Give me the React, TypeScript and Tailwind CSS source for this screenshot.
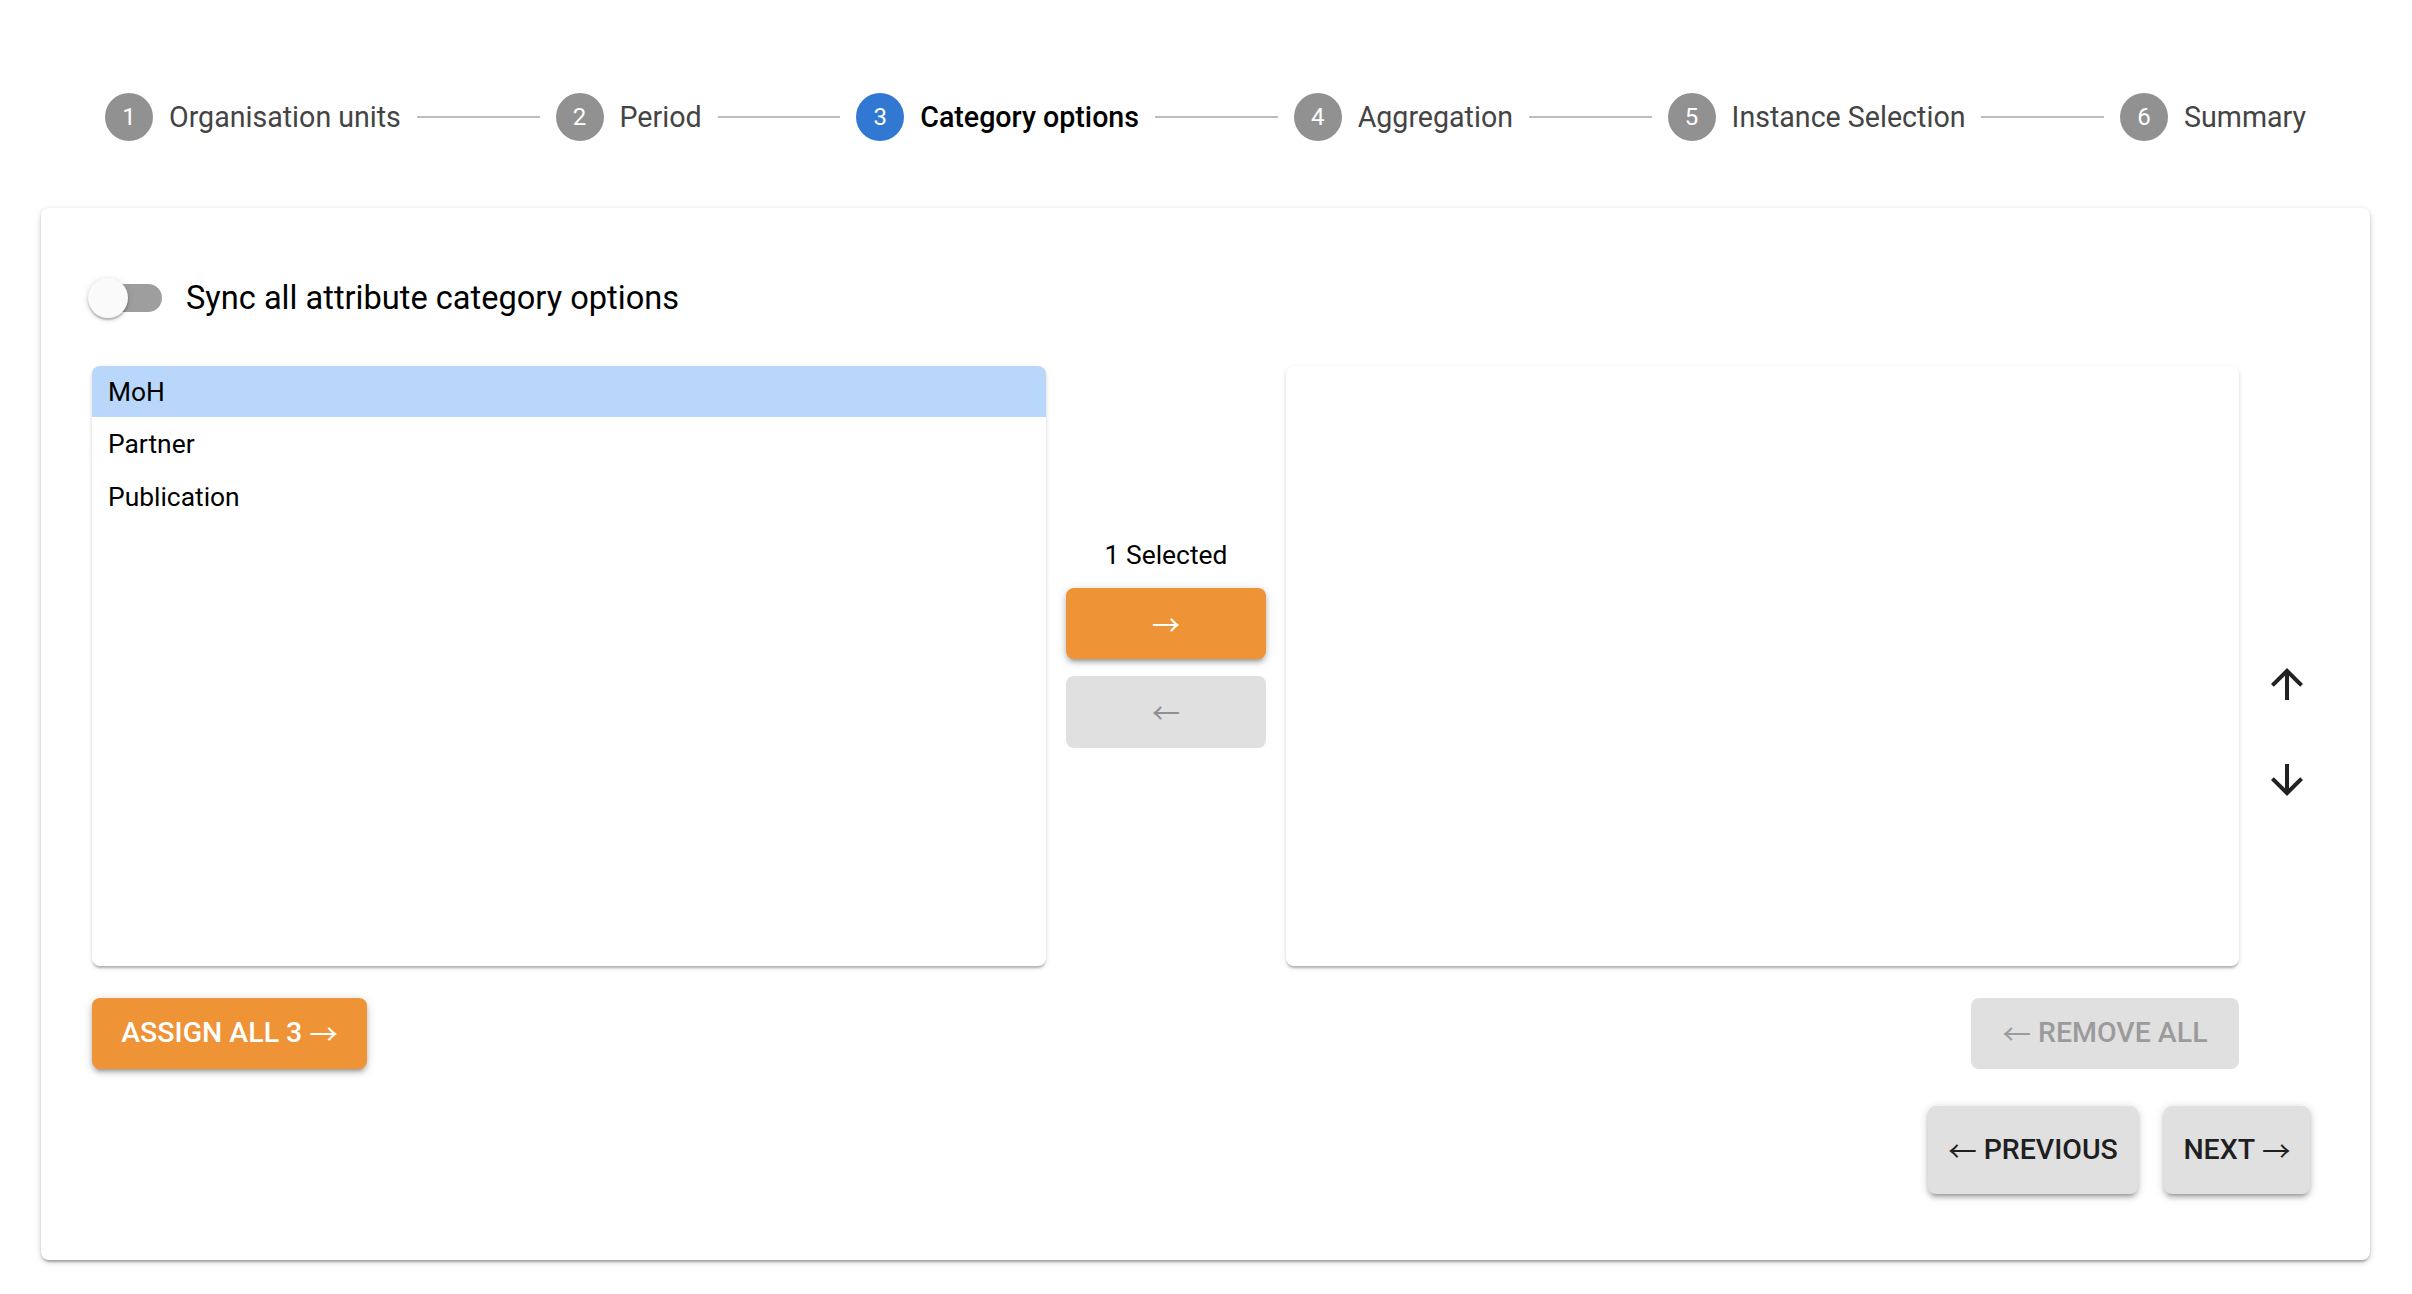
import React from "react";

const steps = [
  { n: 1, label: "Organisation units" },
  { n: 2, label: "Period" },
  { n: 3, label: "Category options", active: true },
  { n: 4, label: "Aggregation" },
  { n: 5, label: "Instance Selection" },
  { n: 6, label: "Summary" },
];

const ArrowUp = () => (
  <svg width="48" height="48" viewBox="0 0 24 24" fill="#212121">
    <path d="M4 12l1.41 1.41L11 7.83V20h2V7.83l5.58 5.59L20 12l-8-8-8 8z" />
  </svg>
);
const ArrowDown = () => (
  <svg width="48" height="48" viewBox="0 0 24 24" fill="#212121">
    <path d="M20 12l-1.41-1.41L13 16.17V4h-2v12.17l-5.58-5.59L4 12l8 8 8-8z" />
  </svg>
);

const Arr = ({ c }: { c: string }) => (
  <span style={{ fontFamily: "'Noto Sans CJK SC', 'DejaVu Sans', sans-serif" }} className="font-normal">
    {c}
  </span>
);

const btnShadow =
  "shadow-[0_2px_10px_0_rgba(0,0,0,0.2),0_4px_4px_0_rgba(0,0,0,0.14),0_6px_2px_-4px_rgba(0,0,0,0.12)]";

export default function App() {
  return (
    <div
      className="min-h-screen bg-white pt-[45px] pl-[41px] pr-[42px]"
      style={{ fontFamily: "Roboto, 'Noto Sans', sans-serif" }}
    >
      {/* Stepper */}
      <div className="flex items-center px-[48px] py-[48px]">
        {steps.map((s, i) => (
          <React.Fragment key={s.n}>
            {i > 0 && <div className="flex-1 h-[2px] bg-[#bdbdbd]" />}
            <div className="flex items-center px-[16px]">
              <div
                className={`w-[48px] h-[48px] rounded-full flex items-center justify-center text-white text-[24px] ${
                  s.active ? "bg-[#3178d3]" : "bg-[#919191]"
                }`}
              >
                {s.n}
              </div>
              <span
                className={`pl-[16px] text-[28.6px] leading-[32px] whitespace-nowrap ${
                  s.active ? "text-black font-medium" : "text-[#444444]"
                }`}
              >
                {s.label}
              </span>
            </div>
          </React.Fragment>
        ))}
      </div>

      {/* Card */}
      <div className="mt-[19px] bg-white rounded-[8px] pt-[52px] pl-[51px] pr-[60px] pb-[66px] shadow-[0_2px_6px_0_rgba(0,0,0,0.2),0_2px_2px_0_rgba(0,0,0,0.14),0_6px_2px_-4px_rgba(0,0,0,0.12)]">
        {/* Switch row */}
        <div className="flex items-center -ml-[22px] h-[76px]">
          <div className="relative w-[116px] h-[76px]">
            <div className="absolute left-[24px] top-[24px] w-[68px] h-[28px] rounded-[14px] bg-[#9e9e9e]" />
            <div className="absolute left-[18px] top-[18px] w-[40px] h-[40px] rounded-full bg-[#fafafa] shadow-[0_2px_2px_0_rgba(0,0,0,0.24),0_1px_6px_0_rgba(0,0,0,0.16)]" />
          </div>
          <span className="text-[32.6px] leading-[40px] text-black">Sync all attribute category options</span>
        </div>

        {/* Transfer */}
        <div className="flex mt-[30px]">
          <div className="w-[954px] h-[600px] bg-white rounded-[8px] shadow-[0_2px_4px_0_rgba(0,0,0,0.16),0_3px_2px_-1px_rgba(0,0,0,0.2)] overflow-hidden">
            <div className="h-[51px] bg-[#b9d7fb] pl-[16px] pt-[3px] flex items-center text-[26.4px] text-black">MoH</div>
            <div className="h-[52px] pl-[16px] pt-[3px] flex items-center text-[26.4px] text-black">Partner</div>
            <div className="h-[54px] pl-[16px] pt-[3px] flex items-center text-[26.4px] text-black">Publication</div>
          </div>

          <div className="w-[240px] flex flex-col items-center pt-[172px]">
            <div className="text-[26.4px] leading-[34px] text-black">1 Selected</div>
            <div className={`mt-[16px] w-[200px] h-[71px] rounded-[8px] bg-[#ee9336] flex items-center justify-center text-white text-[28px] leading-none ${btnShadow}`}>
              <Arr c="→" />
            </div>
            <div className="mt-[17px] w-[200px] h-[72px] rounded-[8px] bg-[#e0e0e0] flex items-center justify-center text-[#8f8f8f] text-[28px] leading-none">
              <Arr c="←" />
            </div>
          </div>

          <div className="w-[953px] h-[600px] bg-white rounded-[8px] shadow-[0_2px_4px_0_rgba(0,0,0,0.16),0_3px_2px_-1px_rgba(0,0,0,0.2)]" />

          <div className="w-[71px] pt-[270px]">
            <div className="w-[96px] h-[96px] flex items-center justify-center">
              <ArrowUp />
            </div>
            <div className="w-[96px] h-[96px] flex items-center justify-center">
              <ArrowDown />
            </div>
          </div>
        </div>

        {/* Assign / remove all */}
        <div className="flex justify-between w-[2147px] mt-[32px]">
          <div className={`w-[275px] h-[71px] rounded-[8px] bg-[#ee9336] flex items-center justify-center gap-[7px] text-white text-[28.5px] leading-none font-medium ${btnShadow}`}>
            <span>ASSIGN ALL 3</span>
            <Arr c="→" />
          </div>
          <div className="w-[268px] h-[71px] rounded-[8px] bg-[#e0e0e0] flex items-center justify-center gap-[7px] text-[#9b9b9b] text-[28.5px] leading-none font-medium">
            <Arr c="←" />
            <span>REMOVE ALL</span>
          </div>
        </div>

        {/* Nav */}
        <div className="flex justify-end gap-[26px] mt-[37px]">
          <div className={`w-[210px] h-[88px] rounded-[8px] bg-[#e0e0e0] flex items-center justify-center gap-[7px] text-[#1f1f1f] text-[28.5px] leading-none font-medium ${btnShadow}`}>
            <Arr c="←" />
            <span>PREVIOUS</span>
          </div>
          <div className={`w-[146px] h-[88px] rounded-[8px] bg-[#e0e0e0] flex items-center justify-center gap-[7px] text-[#1f1f1f] text-[28.5px] leading-none font-medium ${btnShadow}`}>
            <span>NEXT</span>
            <Arr c="→" />
          </div>
        </div>
      </div>
    </div>
  );
}
